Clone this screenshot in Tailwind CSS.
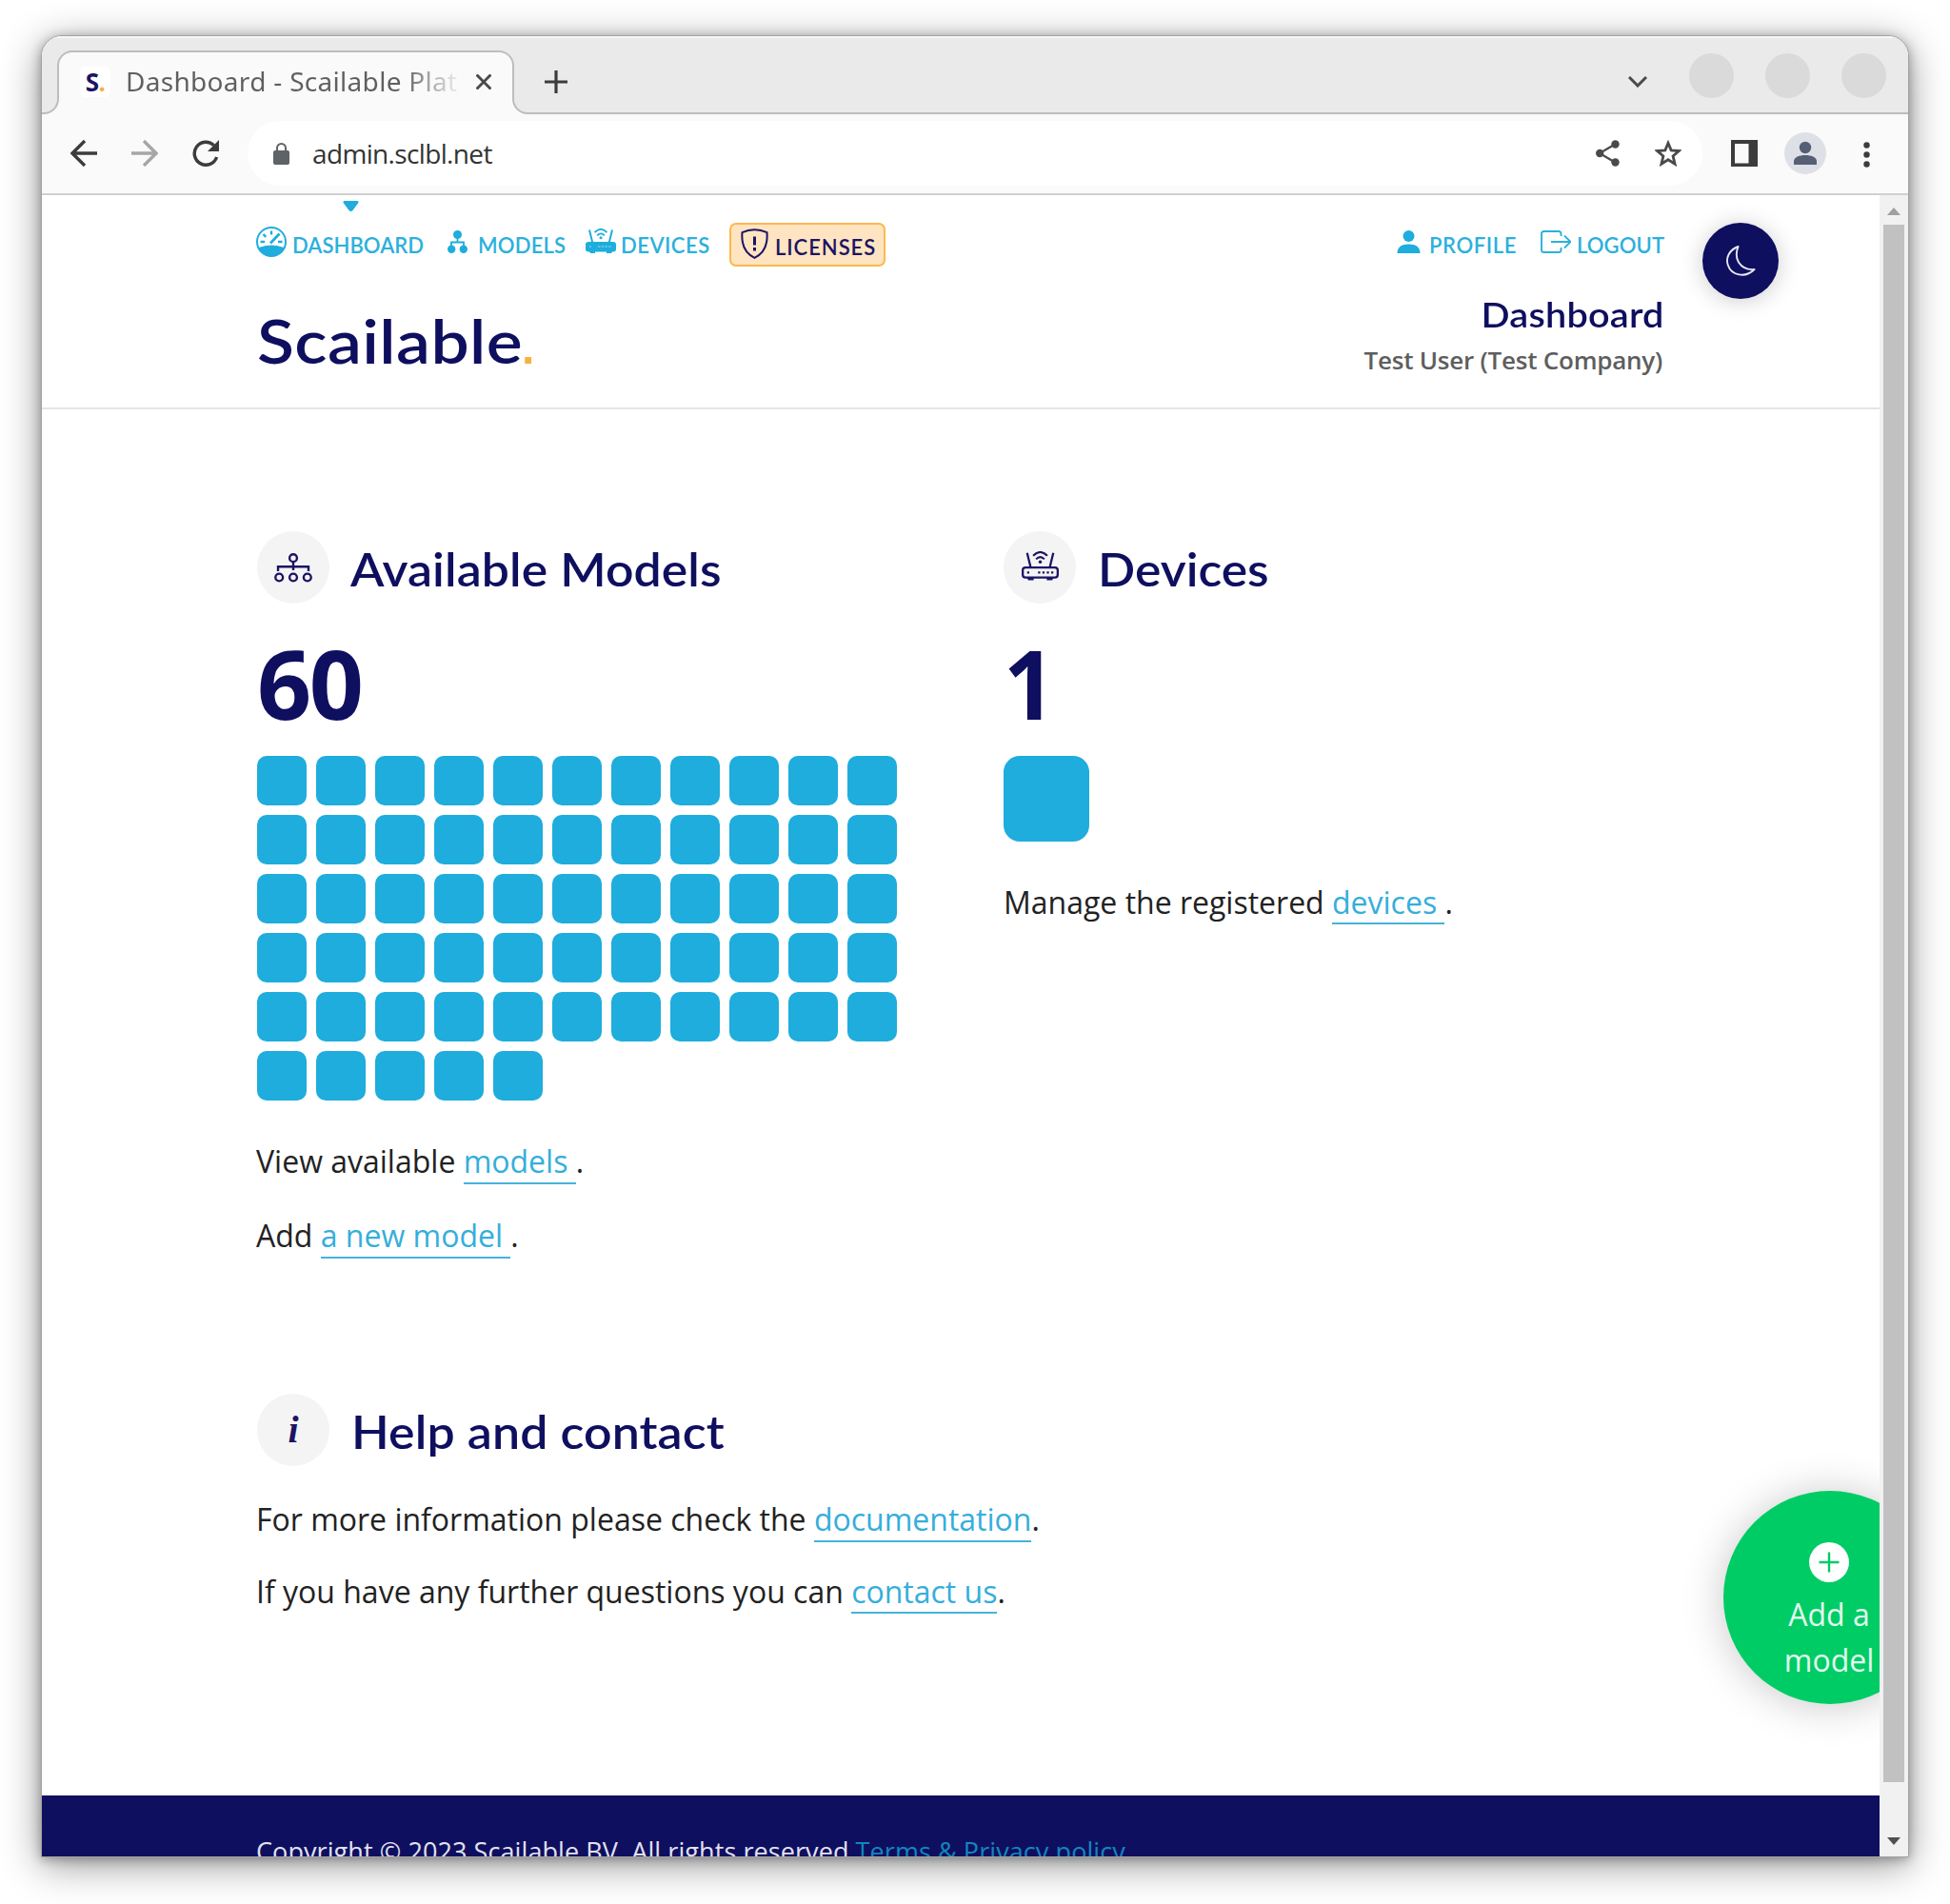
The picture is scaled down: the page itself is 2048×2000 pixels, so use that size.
<!DOCTYPE html>
<html lang="en">
<head>
<meta charset="utf-8">
<title>Dashboard - Scailable Platform</title>
<script src="https://cdn.jsdelivr.net/npm/@tailwindcss/browser@4"></script>
</head>
<body class="h-[2000px] w-[2048px] overflow-hidden bg-white font-['Open_Sans',sans-serif] text-[#222]">

<!-- shared glyphs -->
<svg class="hidden">
  <symbol id="router-waves" viewBox="0 0 34 27">
    <path d="M5 1.5 8.3 15M29 1.5 25.700 15" fill="none" stroke="currentColor" stroke-width="2"/>
    <path d="M10.500 4.200Q17-2.600 23.500 4.200M13.200 7.300Q17 3.400 20.800 7.300" fill="none" stroke="currentColor" stroke-width="1.800"/>
    <circle cx="17" cy="9.800" r="1.500" fill="currentColor"/>
  </symbol>
</svg>

<div class="ml-[43px] mt-[37px] flex h-[1914px] w-[1962px] flex-col overflow-hidden rounded-t-[22px] border border-[#a3a3a3] bg-white shadow-[0_8px_40px_rgba(0,0,0,0.42),0_2px_12px_rgba(0,0,0,0.3)]">

  <!-- tab strip -->
  <div class="relative flex h-[81px] shrink-0 items-start bg-[#eaeaea] shadow-[inset_0_2px_0_#f6f6f6]">
    <svg class="absolute left-0 top-0 h-[84px] w-[1960px]" viewBox="0 0 1960 84" fill="none">
      <path d="M-2 81H2a15 15 0 0 0 15-15V31a15 15 0 0 1 15-15H480a15 15 0 0 1 15 15V66a15 15 0 0 0 15 15H1962V86H-2Z" fill="#fafafa" stroke="#bdbdbd" stroke-width="2"/>
    </svg>
    <div class="relative ml-[40px] mt-[32px] flex h-8 w-8 items-center justify-center rounded-md bg-white">
      <span class="text-[26px] font-bold leading-8 tracking-[-0.5px] text-[#1b1464]">S<span class="text-[#fbb03b]">.</span></span>
    </div>
    <div class="relative ml-[16px] mt-[27px] w-[354px] overflow-hidden whitespace-nowrap bg-gradient-to-r from-[#5f5f5f] from-82% to-transparent bg-clip-text font-['Noto_Sans',sans-serif] text-[28px] leading-[40px] tracking-[0.3px] text-transparent">Dashboard - Scailable Plat</div>
    <svg class="relative ml-[14px] mt-[40px] size-4 shrink-0" viewBox="0 0 16 16" stroke="#4a4a4a" stroke-width="3"><path d="M0.500 0.500 15.500 15.500M15.500 0.500 0.500 15.500"/></svg>
    <svg class="relative ml-[56px] mt-[36px] size-6 shrink-0" viewBox="0 0 24 24" stroke="#3c3c3c" stroke-width="3.200"><path d="M12 0V24M0 12H24"/></svg>
    <svg class="relative ml-[1114px] mt-[42px] h-3 w-5 shrink-0" viewBox="0 0 20 12" fill="none" stroke="#4a4a4a" stroke-width="3"><path d="M1 1 10 10 19 1"/></svg>
    <div class="relative ml-[44px] mt-[18px] flex gap-[33px]">
      <i class="size-[47px] rounded-full bg-[#dadada]"></i>
      <i class="size-[47px] rounded-full bg-[#dadada]"></i>
      <i class="size-[47px] rounded-full bg-[#dadada]"></i>
    </div>
  </div>

  <!-- toolbar -->
  <div class="relative flex h-[86px] shrink-0 items-center border-b-2 border-[#d0d0d0] pl-[30px] before:absolute before:inset-x-0 before:bottom-0 before:top-[2px] before:-z-0 before:bg-[#fafafa]">
    <svg class="relative h-7 w-7" viewBox="0 0 28 28" fill="none" stroke="#3c3c3c" stroke-width="3.400"><path d="M28 14H3M15 1 2 14 15 27"/></svg>
    <svg class="relative ml-9 h-7 w-7" viewBox="0 0 28 28" fill="none" stroke="#a6a6a6" stroke-width="3.400"><path d="M0 14H25M13 1 26 14 13 27"/></svg>
    <svg class="relative ml-9 h-7 w-7" viewBox="0 0 28 28"><path d="M25.600 18A12 12 0 1 1 22.600 5.600" fill="none" stroke="#3c3c3c" stroke-width="3.400"/><path d="M28 0V12H16Z" fill="#3c3c3c"/></svg>
    <div class="relative ml-[30px] flex h-[68px] w-[1528px] items-center rounded-full bg-white pl-[27px] pr-[22px]">
      <svg class="h-[23px] w-[17px]" viewBox="0 0 17 23"><rect y="8" width="17" height="15" rx="2" fill="#5f6368"/><path d="M4 9V5.500a4.500 4.500 0 0 1 9 0V9" fill="none" stroke="#5f6368" stroke-width="2"/></svg>
      <span class="ml-[24px] text-[28px] leading-[40px] tracking-[-0.65px] text-[#333]">admin.sclbl.net</span>
      <svg class="ml-auto h-7 w-[25px]" viewBox="0 0 25 28" fill="#4a4a4a"><path d="M21 4 4 14 21 24" fill="none" stroke="#4a4a4a" stroke-width="2.200"/><circle cx="4.200" cy="14" r="4.200"/><circle cx="20.500" cy="4.500" r="4.200"/><circle cx="20.500" cy="23.500" r="4.200"/></svg>
      <svg class="ml-[37px] size-7" viewBox="0 0 28 28" fill="none" stroke="#4a4a4a" stroke-width="2.600"><path d="M14 3.200 16.900 10.200 24.500 10.800 18.700 15.800 20.500 23.400 14 19.300 7.500 23.400 9.300 15.800 3.500 10.800 11.100 10.200Z" transform="translate(-1.200 -0.200) scale(1.085)"/></svg>
    </div>
    <svg class="relative ml-[30px] size-7" viewBox="0 0 28 28"><path d="M0 0H28V28H0ZM4 4V24.500H18.500V4Z" fill="#3c3c3c" fill-rule="evenodd"/></svg>
    <svg class="relative ml-7 size-11" viewBox="0 0 44 44" fill="#566074"><circle cx="22" cy="22" r="22" fill="#dde1e7"/><circle cx="22" cy="16" r="6.200"/><path d="M10 34V30.500C10 26 16 24 22 24S34 26 34 30.500V34Z"/></svg>
    <svg class="relative ml-[39px] mt-[2px] h-[27px] w-[7px]" viewBox="0 0 7 27" fill="#3c3c3c"><circle cx="3.500" cy="3.500" r="3.200"/><circle cx="3.500" cy="13.500" r="3.200"/><circle cx="3.500" cy="23.500" r="3.200"/></svg>
  </div>

  <!-- viewport -->
  <div class="flex min-h-0 flex-1">
    <div class="relative w-[1930px] overflow-hidden">
      <header class="h-[225px] border-b-2 border-[#e1e5ea] px-[226px] pt-[29px] font-[Lato,sans-serif] font-semibold">
        <nav class="flex h-[46px] items-start text-[22px] leading-[48px] text-[#2cb0dc]">
          <a class="relative flex w-[199px]">
            <svg class="absolute left-[90px] -top-[23px] h-[11px] w-[17px]" viewBox="0 0 17 11" fill="#1eaddc"><path d="M2 0H15Q17.500 0 16 2.500L10.500 10Q8.500 12 6.500 10L1 2.500Q-.5 0 2 0Z"/></svg>
            <svg class="-ml-px mt-1 size-8 shrink-0 text-[#1eaddc]" viewBox="0 0 32 32" fill="none" stroke="currentColor"><circle cx="16" cy="16" r="15" stroke-width="2"/><path d="M3 22.500Q16 17.500 29 22.500A14.500 14.500 0 0 1 3 22.500Z" fill="currentColor"/><path d="M16 4.500V8.500M4.500 16H9M23 16H27.500M7.500 8 10.300 10.800" stroke-width="2.400"/><path d="M15 17.500 24.500 7.500" stroke-width="2.800"/></svg>
            <span class="ml-[6px] tracking-[0.050px]">DASHBOARD</span>
          </a>
          <a class="flex w-[144px]">
            <svg class="ml-[1px] mt-2 h-6 w-[21px] shrink-0" viewBox="0 0 21 24" fill="#1eaddc"><circle cx="10.500" cy="4.500" r="4.500"/><path d="M10.500 8V13M4 16.500V12.500H17V16.500" fill="none" stroke="#1eaddc" stroke-width="1.800"/><circle cx="4.200" cy="19.800" r="4.200"/><circle cx="16.800" cy="19.800" r="4.200"/></svg>
            <span class="ml-[11px] tracking-[0.2px]">MODELS</span>
          </a>
          <a class="flex w-[153px]">
            <svg class="ml-[1px] mt-[6px] h-[27px] w-[34px] shrink-0 text-[#1eaddc]" viewBox="0 0 34 27"><use href="#router-waves"/><rect x="1" y="14" width="32" height="10.500" rx="3" fill="currentColor"/><path d="M5 24H11V26H6ZM23 24H29L28 26H23Z" fill="currentColor"/><path d="M5 19H7M14 19H29" stroke="#6fcdea" stroke-width="1.300" stroke-dasharray="2.500 1.200"/></svg>
            <span class="ml-1 tracking-[0.5px]">DEVICES</span>
          </a>
          <a class="flex h-[46px] w-[164px] rounded-[7px] border-2 border-[#fdb84c] bg-[#fee4c0] pl-[10px] text-[#1b1464]">
            <svg class="mt-[4px] h-8 w-[29px] shrink-0" viewBox="0 0 29 32" fill="none" stroke="currentColor" stroke-width="2"><path d="M14.500 1.200Q21 1.200 27.500 4.200C28.500 16 25.500 25.500 14.500 30.800C3.500 25.500 .5 16 1.500 4.200Q8 1.200 14.500 1.200Z"/><path d="M14.500 8.500V17.500M14.500 20V23.500" stroke-width="3"/></svg>
            <span class="ml-[7px] tracking-[0.95px]">LICENSES</span>
          </a>
          <a class="ml-auto flex w-[151px]">
            <svg class="mt-2 h-6 w-[25px] shrink-0" viewBox="0 0 25 24" fill="#1eaddc"><circle cx="12.500" cy="6" r="6"/><path d="M.5 24C.5 17.500 5 14.500 12.500 14.500S24.500 17.500 24.500 24Z"/></svg>
            <span class="ml-[9px] tracking-[0.6px]">PROFILE</span>
          </a>
          <a class="flex w-[130px]">
            <svg class="mt-2 h-6 w-8 shrink-0" viewBox="0 0 32 24" fill="none" stroke="#2cb0dc" stroke-width="1.900"><path d="M21.500 6V3.500Q21.500 1 19 1H3.500Q1 1 1 3.500V20.500Q1 23 3.500 23H19Q21.500 23 21.500 20.500V18"/><path d="M11 12H31M25 5.500 31.500 12 25 18.500"/></svg>
            <span class="ml-[6px] tracking-[0.1px]">LOGOUT</span>
          </a>
        </nav>
        <div class="flex items-start justify-between text-[#0f0f60]">
          <h1 class="mt-[38px] origin-left scale-x-[1.115] text-[64px] leading-[80px] tracking-[0.400px]">Scailable<span class="-ml-[4px] font-['Liberation_Sans',sans-serif] font-normal text-[#fbb03b]">.</span></h1>
          <div class="mt-[26px] flex flex-col items-end">
            <h2 class="origin-right scale-x-[1.1] text-[36px] leading-[48px] tracking-[0.200px]">Dashboard</h2>
            <p class="mr-[2px] mt-1 font-['Open_Sans',sans-serif] text-[26px] leading-[40px] tracking-[-0.23px] text-[#5e5e5e]">Test User (Test Company)</p>
          </div>
        </div>
      </header>

      <button class="absolute left-[1744px] top-[29px] flex size-20 items-center justify-center rounded-full bg-[#0f0f60] shadow-[0_2px_24px_rgba(0,0,0,0.2)]">
        <svg class="h-8 w-[31px]" viewBox="0 0 31 32" fill="none" stroke="#e8e8f4" stroke-width="1.900" stroke-linejoin="round"><path d="M12.500 1C3 4.500-.8 13 1.800 20.500C5.500 31.500 20 34.500 29.500 25Q18.500 26 13 17.500Q8.800 10.500 12.500 1Z"/></svg>
      </button>

      <main class="px-[226px] pt-[128px] text-[32px] leading-[48px]">
        <div class="grid grid-cols-[784px_694px]">
          <section>
            <div class="flex h-[76px]">
              <div class="flex size-[76px] items-center justify-center rounded-full bg-[#f4f4f4]">
                <svg class="h-[31px] w-10 text-[#1b1464]" viewBox="0 0 40 31" fill="none" stroke="currentColor" stroke-width="2.400"><circle cx="20" cy="5.200" r="3.900"/><path d="M20 9.200V18M4 19V14.200H36V19"/><circle cx="5.200" cy="25.500" r="3.900"/><circle cx="20" cy="25.500" r="3.900"/><circle cx="34.800" cy="25.500" r="3.900"/></svg>
              </div>
              <h3 class="ml-[22px] mt-[2px] origin-left scale-x-[1.077] font-[Lato,sans-serif] text-[48px] font-semibold leading-[76px] tracking-[0.100px] text-[#0f0f60]">Available Models</h3>
            </div>
            <div class="mt-[33px] text-[100px] font-bold leading-[100px] tracking-[-2.500px] text-[#0f0f60]">60</div>
            <div id="models" class="mt-[27px] grid w-[672px] grid-cols-11 gap-[10px] [&>i]:size-[52px] [&>i]:rounded-[10px] [&>i]:bg-[#1eaddc]"></div>
            <p class="-ml-px mt-[40px]">View available <a class="border-b-2 border-[#46b3da] pb-px text-[#35aedb]">models&nbsp;</a>.</p>
            <p class="-ml-px mt-[30px]">Add <a class="border-b-2 border-[#46b3da] pb-px text-[#35aedb]">a new model&nbsp;</a>.</p>
          </section>
          <section>
            <div class="flex h-[76px]">
              <div class="flex size-[76px] items-center justify-center rounded-full bg-[#f4f4f4]">
                <svg class="-mt-[3px] h-[31px] w-[39px] text-[#1b1464]" viewBox="0 0 34 27"><use href="#router-waves"/><rect x="1" y="15" width="32" height="9" rx="2.500" fill="none" stroke="currentColor" stroke-width="2"/><path d="M5 24.500H11V26.500H6ZM23 24.500H29L28 26.500H23Z" fill="currentColor"/><path d="M5 19.500H7M15 19.500H30" stroke="currentColor" stroke-width="2" stroke-dasharray="2 2"/></svg>
              </div>
              <h3 class="ml-[23px] mt-[2px] origin-left scale-x-[1.075] font-[Lato,sans-serif] text-[48px] font-semibold leading-[76px] text-[#0f0f60]">Devices</h3>
            </div>
            <div class="mt-[33px] origin-left scale-x-[0.95] text-[100px] font-bold leading-[100px] text-[#0f0f60]">1</div>
            <div class="mt-[27px] size-[90px] rounded-[17px] bg-[#1eaddc]"></div>
            <p class="mt-[40px]">Manage the registered <a class="border-b-2 border-[#46b3da] text-[#35aedb]">devices&nbsp;</a>.</p>
          </section>
        </div>

        <section class="mt-[142px]">
          <div class="flex h-[77px]">
            <div class="flex size-[76px] items-center justify-center rounded-full bg-[#f4f4f4] font-['Liberation_Serif',serif] text-[40px] font-bold italic leading-[76px] text-[#1b1464]">i</div>
            <h3 class="ml-[23px] mt-[2px] origin-left scale-x-[1.08] font-[Lato,sans-serif] text-[48px] font-semibold leading-[76px] tracking-[0.100px] text-[#0f0f60]">Help and contact</h3>
          </div>
          <p class="-ml-px mt-[31px]">For more information please check the <a class="border-b-2 border-[#46b3da] pb-px text-[#35aedb]">documentation</a>.</p>
          <p class="-ml-px mt-[28px]">If you have any further questions you can <a class="border-b-2 border-[#46b3da] text-[#35aedb]">contact us</a>.</p>
        </section>
      </main>

      <footer class="mt-[190px] h-[110px] whitespace-nowrap bg-[#0f0f60] pl-[225px] pt-[39px] text-[27px] leading-[40px] tracking-[0.08px] text-[#e2e2ee]">Copyright © 2023 Scailable BV. All rights reserved <a class="text-[#1286bd]">Terms &amp; Privacy policy</a></footer>

      <button class="absolute left-[1766px] top-[1361px] flex size-56 flex-col items-center rounded-full bg-[#00cc66] pr-[2px] pt-[54px] text-[32px] leading-[48px] text-[#e2faee] shadow-[0_2px_44px_rgba(0,0,0,0.22)]">
        <svg class="size-[42px] shrink-0" viewBox="0 0 42 42"><circle cx="21" cy="21" r="21" fill="#fff"/><path d="M21 10.500V31.500M10.500 21H31.500" stroke="#00cc66" stroke-width="2.400"/></svg>
        <span class="mt-[10px] w-[110px] text-center">Add a model</span>
      </button>
    </div>

    <!-- scrollbar -->
    <div class="flex w-[30px] flex-col items-center bg-[#f1f1f1]">
      <svg class="mt-[13px] h-2 w-[14px]" viewBox="0 0 14 8" fill="#a0a0a0"><path d="M7 0 14 8H0Z"/></svg>
      <div class="mt-[10px] h-[1636px] w-[22px] bg-[#c1c1c1]"></div>
      <svg class="mt-[58px] h-2 w-[14px]" viewBox="0 0 14 8" fill="#505050"><path d="M7 8 14 0H0Z"/></svg>
    </div>
  </div>
</div>

<script>
  document.getElementById('models').innerHTML = '<i></i>'.repeat(60);
</script>
</body>
</html>
